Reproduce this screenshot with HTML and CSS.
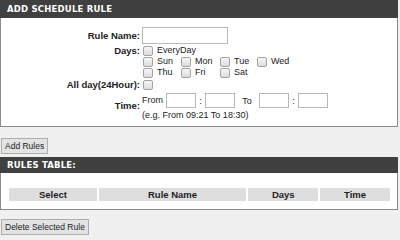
FILE: index.html
```html
<!DOCTYPE html>
<html lang="en">
<head>
    <meta charset="UTF-8">
    <meta name="viewport" content="width=device-width, initial-scale=1.0">
    <title>Schedule Rules</title>
    <link rel="stylesheet" href="styles.css">
</head>
<body>
    <div class="box">
        <div class="box-title">ADD SCHEDULE RULE</div>
        <div class="rule-form">
            <label class="lbl lbl-mid" for="ruleName">Rule Name:</label>
            <div class="field"><input class="txt name-box" type="text" id="ruleName"></div>

            <div class="lbl lbl-top">Days:</div>
            <div class="days">
                <label class="day day-all"><input type="checkbox">EveryDay</label>
                <label class="day"><input type="checkbox">Sun</label>
                <label class="day"><input type="checkbox">Mon</label>
                <label class="day"><input type="checkbox">Tue</label>
                <label class="day"><input type="checkbox">Wed</label>
                <label class="day"><input type="checkbox">Thu</label>
                <label class="day"><input type="checkbox">Fri</label>
                <label class="day"><input type="checkbox">Sat</label>
            </div>

            <label class="lbl lbl-mid" for="allDay">All day(24Hour):</label>
            <div class="field allday"><input type="checkbox" id="allDay"></div>

            <div class="lbl lbl-mid">Time:</div>
            <div class="time">
                <div class="time-row">
                    <span class="from">From</span>
                    <input class="txt time-box" type="text">
                    <span class="colon">:</span>
                    <input class="txt time-box" type="text">
                    <span class="to">To</span>
                    <input class="txt time-box" type="text">
                    <span class="colon">:</span>
                    <input class="txt time-box" type="text">
                </div>
                <div class="hint">(e.g. From 09:21 To 18:30)</div>
            </div>
        </div>
    </div>

    <button type="button" class="btn add-btn">Add Rules</button>

    <div class="box rules-box">
        <div class="box-title">RULES TABLE:</div>
        <div class="rules-body">
            <table class="rules">
                <tr>
                    <th class="c-sel">Select</th>
                    <th class="c-name">Rule Name</th>
                    <th class="c-days">Days</th>
                    <th class="c-time">Time</th>
                </tr>
            </table>
        </div>
    </div>

    <button type="button" class="btn del-btn">Delete Selected Rule</button>
</body>
</html>
```

FILE: styles.css
```css
body {
    margin: 0;
    background-color: #f0f0f0;
    font-family: 'Liberation Sans', Arial, sans-serif;
    font-size: 9px;
    color: #222;
}
.box {
    margin-right: 2px;
    background-color: #fff;
    border: 1px solid #8a8a8a;
    border-top: none;
}
.box-title {
    height: 18px;
    line-height: 18px;
    padding-left: 7px;
    background-color: #404040;
    color: #fff;
    font-family: 'DejaVu Sans', Verdana, sans-serif;
    font-weight: bold;
    font-size: 8.5px;
    letter-spacing: 0.2px;
    margin-left: -1px;
    margin-right: -1px;
}

/* schedule form */
.rule-form {
    display: grid;
    grid-template-columns: 139px auto;
    column-gap: 2px;
    padding: 9px 0 6px 0;
}
.lbl {
    font-weight: bold;
    font-size: 9.5px;
    text-align: right;
    color: #222;
}
.lbl-mid {
    align-self: center;
}
.lbl-top {
    margin-top: 1px;
}
.txt {
    border: 1px solid #b8b8b8;
    background-color: #fff;
    margin: 0;
    padding: 0;
    box-sizing: border-box;
}
.name-box {
    width: 86px;
    height: 17px;
}
input[type="checkbox"] {
    appearance: none;
    -webkit-appearance: none;
    width: 10px;
    height: 10px;
    margin: 0;
    border: 1px solid #a3a3a3;
    border-radius: 2px;
    background: linear-gradient(#f7f7f7, #dcdcdc);
    flex-shrink: 0;
}
.days {
    display: grid;
    grid-template-columns: 38px 39px 37px auto;
    grid-auto-rows: 11px;
    margin-top: 1px;
    margin-left: 1px;
}
.day {
    display: flex;
    align-items: center;
    gap: 4px;
    line-height: 11px;
}
.day-all {
    grid-column: 1 / 5;
}
.allday {
    display: flex;
    align-items: center;
    height: 13px;
    padding-left: 1px;
}
.time {
    margin-top: 2px;
}
.time-row {
    display: flex;
    align-items: center;
    height: 15px;
}
.from {
    width: 24px;
    margin-top: -2px;
}
.time-box {
    width: 30px;
    height: 15px;
}
.colon {
    width: 9px;
    text-align: center;
}
.to {
    width: 24px;
    text-align: center;
}
.hint {
    margin-top: 2px;
    line-height: 10px;
}

/* buttons */
.btn {
    display: block;
    margin: 11px 0 0 1px;
    height: 16px;
    padding: 0 3px;
    border: 1px solid #adadad;
    background-color: #e3e3e3;
    font-family: 'Liberation Sans', Arial, sans-serif;
    font-size: 8.5px;
    color: #222;
}
.del-btn {
    margin-top: 9px;
}

/* rules table */
.rules-box {
    margin-top: 3px;
}
.rules-box .box-title {
    height: 16px;
    line-height: 16px;
}
.rules-body {
    padding: 13px 5px 6px 6px;
}
.rules {
    width: 100%;
    border-spacing: 2px;
}
.rules th {
    height: 13px;
    padding: 0;
    background-color: #dedede;
    font-size: 9.5px;
    color: #222;
}
.c-sel { width: 88px; }
.c-name { width: 148px; }
.c-days { width: 70px; }
.c-time { width: 70px; }
```
